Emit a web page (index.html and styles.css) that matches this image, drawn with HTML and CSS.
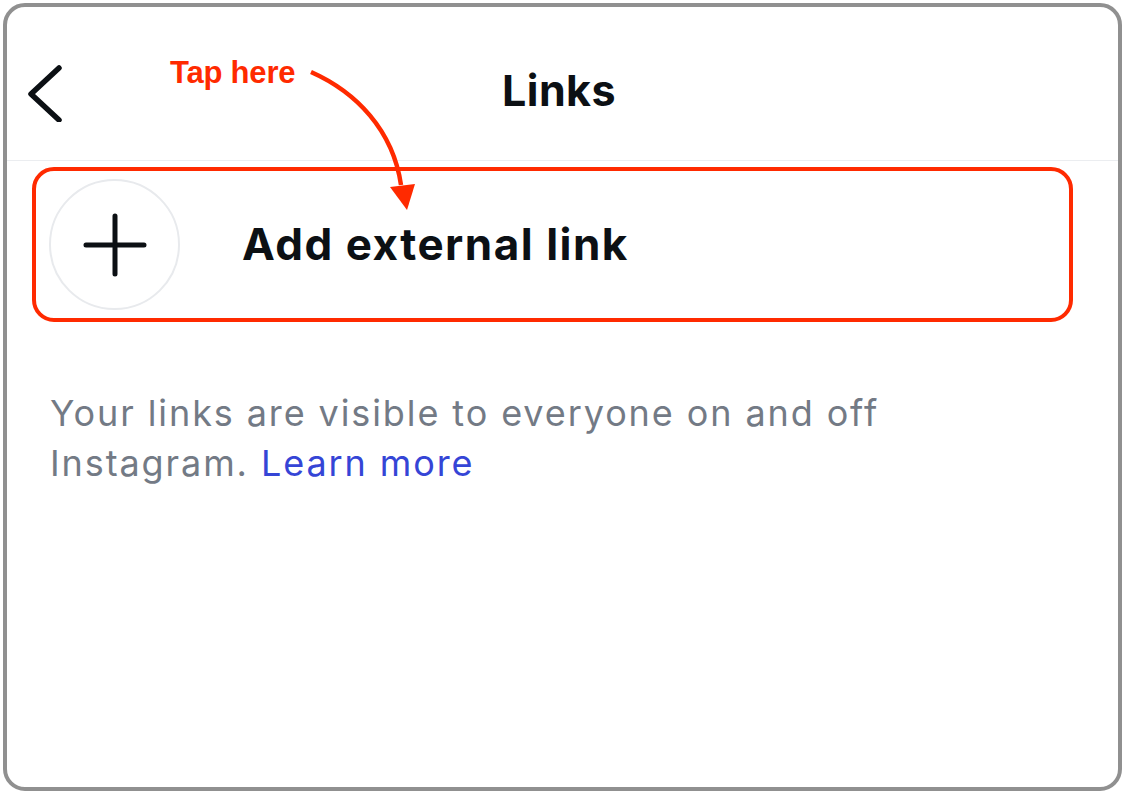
FILE: index.html
```html
<!DOCTYPE html>
<html lang="en">
<head>
<meta charset="utf-8">
<title>Links</title>
<link rel="stylesheet" href="styles.css">
</head>
<body>
<div class="frame">
  <header class="header">
    <div class="back">
      <svg width="40" height="60" viewBox="0 0 40 60" aria-hidden="true">
        <polyline points="33,6 5,32 33,58" fill="none" stroke="#0c1014" stroke-width="5.5" stroke-linecap="round" stroke-linejoin="round"/>
      </svg>
    </div>
    <h1 class="title">Links</h1>
    <div></div>
  </header>
  <div class="content">
    <div class="row">
      <div class="plus">
        <svg width="64" height="64" viewBox="0 0 64 64" aria-hidden="true">
          <path d="M32 3 V61 M3 32 H61" stroke="#0c1014" stroke-width="5" stroke-linecap="round"/>
        </svg>
      </div>
      <div class="row-label">Add external link</div>
    </div>
    <p class="note">Your links are visible to everyone on and off Instagram. <span class="learn">Learn more</span></p>
  </div>
  <div class="tap">Tap here</div>
  <svg class="arrow" width="140" height="160" viewBox="0 0 140 160" aria-hidden="true">
    <path d="M10 22 C55 42 92 80 100 135" fill="none" stroke="#ff2a00" stroke-width="4.5"/>
    <polygon points="89,137 114,134 106,160" fill="#ff2a00"/>
  </svg>
</div>
</body>
</html>
```

FILE: styles.css
```css
* { box-sizing: border-box; }
html, body { margin: 0; padding: 0; background: #ffffff; }
body {
  font-family: Inter, "Noto Sans", "Liberation Sans", sans-serif;
  color: #0c1014;
}
.frame {
  position: relative;
  margin: 3px;
  width: 1119px;
  height: 788px;
  border: 4px solid #909090;
  border-radius: 22px;
  overflow: hidden;
}
.header {
  display: grid;
  grid-template-columns: 1fr auto 1fr;
  align-items: center;
  height: 154px;
  border-bottom: 1px solid #ebedf0;
  padding-left: 19px;
  padding-right: 26px;
}
.back { display: flex; align-items: center; height: 60px; margin-top: 17px; }
.title {
  margin: 0;
  margin-top: 13px;
  font-size: 43px;
  font-weight: 700;
  letter-spacing: 0.4px;
}
.content { padding: 6px 45px 0 25px; }
.row {
  display: flex;
  align-items: center;
  gap: 62px;
  height: 155px;
  border: 4px solid #ff2a00;
  border-radius: 22px;
  padding-left: 13px;
}
.plus {
  width: 131px;
  height: 131px;
  border: 2px solid #e8eaed;
  border-radius: 50%;
  display: flex;
  align-items: center;
  justify-content: center;
}
.row-label {
  font-size: 44px;
  font-weight: 700;
  letter-spacing: 1.5px;
  margin-top: -2px;
}
.note {
  margin: 66px 0 0 18px;
  font-size: 36px;
  line-height: 50px;
  letter-spacing: 1.9px;
  color: #737a85;
  max-width: 880px;
}
.learn { color: #3545d6; }
.tap {
  position: absolute;
  left: 163px;
  top: 50px;
  font-family: "Liberation Sans", Arial, sans-serif;
  font-weight: 700;
  font-size: 31px;
  line-height: 1;
  letter-spacing: -0.2px;
  color: #ff2a00;
}
.arrow {
  position: absolute;
  left: 294px;
  top: 43px;
}
```
